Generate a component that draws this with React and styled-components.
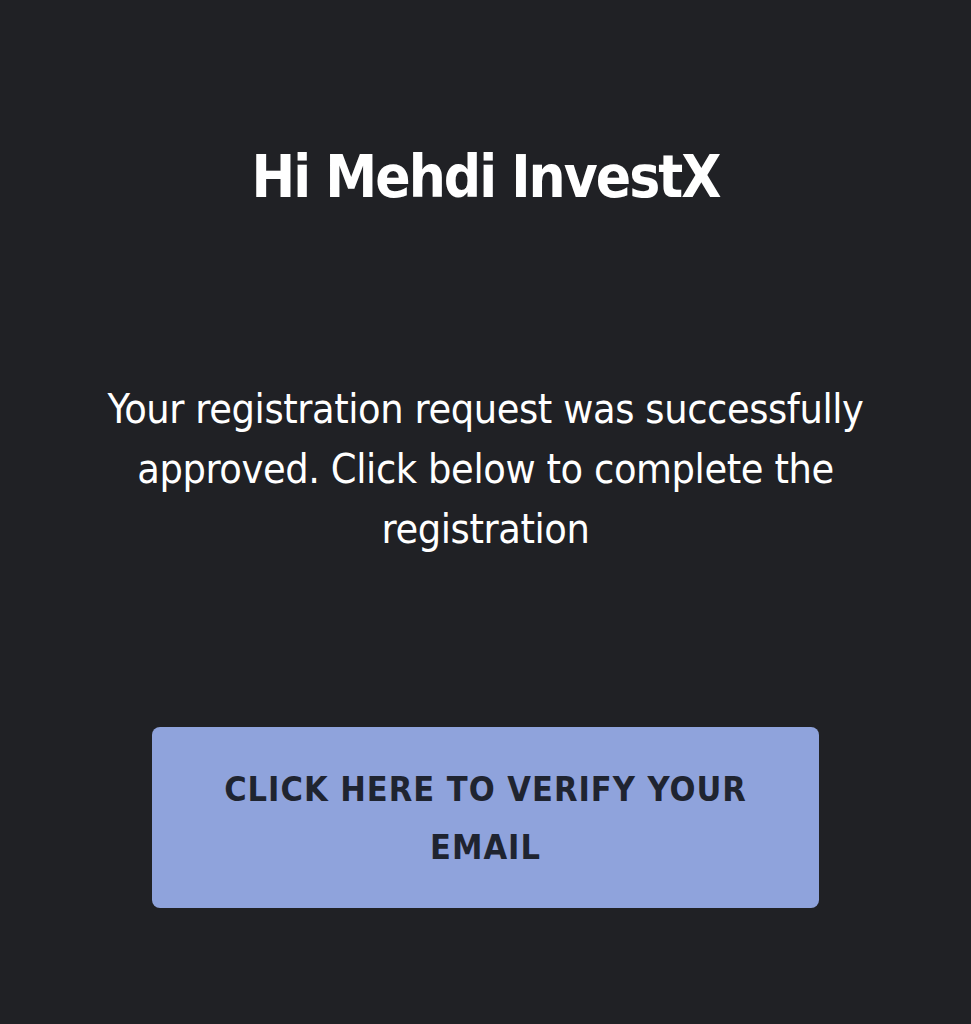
import styled, { createGlobalStyle } from 'styled-components';

const Global = createGlobalStyle`
  html, body {
    margin: 0;
    padding: 0;
    background: #202125;
  }
  body {
    font-family: "DejaVu Sans Condensed", "DejaVu Sans", sans-serif;
  }
`;

function App() {
  return (
    <Page>
      <Global />
      <Heading>Hi Mehdi InvestX</Heading>
      <Message>
        Your registration request was successfully approved. Click below to complete the registration
      </Message>
      <VerifyButton href="#">Click here to verify your email</VerifyButton>
    </Page>
  );
}

const Page = styled.div`
  min-height: 1024px;
  box-sizing: border-box;
  display: flex;
  flex-direction: column;
  align-items: center;
  padding: 144px 90px 0;
  color: #ffffff;
  text-align: center;
`;

const Heading = styled.h1`
  margin: 0;
  font-size: 58px;
  font-weight: bold;
  letter-spacing: -2px;
  line-height: 66px;
`;

const Message = styled.p`
  margin: 169px 0 0;
  max-width: 770px;
  font-size: 41px;
  letter-spacing: -0.4px;
  line-height: 60px;
`;

const VerifyButton = styled.a`
  margin-top: 168px;
  box-sizing: border-box;
  width: 667px;
  height: 181px;
  display: flex;
  align-items: center;
  justify-content: center;
  padding: 0 64px;
  background: #8fa3dc;
  border-radius: 8px;
  color: #1f2430;
  text-decoration: none;
  text-transform: uppercase;
  font-size: 34px;
  font-weight: bold;
  letter-spacing: 1px;
  line-height: 58px;
`;

export default App;
